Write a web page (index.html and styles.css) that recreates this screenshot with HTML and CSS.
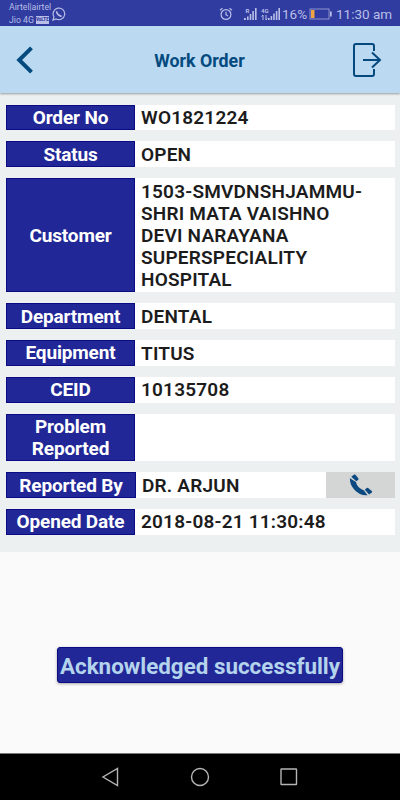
FILE: index.html
```html
<!DOCTYPE html>
<html lang="en">
<head>
    <meta charset="utf-8">
    <meta name="viewport" content="width=device-width, initial-scale=1.0">
    <title>Work Order</title>
    <link rel="stylesheet" href="styles.css">
</head>
<body>
<div class="statusbar">
    <div class="carrier">
        <div>Airtel|airtel</div>
        <div class="jio">Jio 4G <span class="volte">VoLTE</span></div>
    </div>
    <svg class="whatsapp" width="14" height="14" viewBox="0 0 14 14" fill="none" stroke="#b9bfe8" stroke-width="1.2">
        <path d="M1 13l.9-3.2A5.8 5.8 0 1 1 4.2 12z"/>
        <path d="M4.7 4.2c-.5 2.3 2.8 5.5 5 4.8" stroke-width="1.7"/>
    </svg>
    <svg class="alarm" width="14" height="14" viewBox="0 0 14 14" fill="none" stroke="#b9bfe8" stroke-width="1.2">
        <circle cx="7" cy="7.5" r="4.9"/>
        <path d="M7 4.7v3l2 1.2M1 3.3l2.5-2M13 3.3l-2.5-2"/>
    </svg>
    <svg class="signal" width="38" height="14" viewBox="0 0 38 14" fill="#b9bfe8">
        <path d="M1 11h1.8v2H1zM4 9.5h1.6V13H4zM6.7 7h1.6v6H6.7zM9.3 4h1.6v9H9.3zM12 1h1.6v12H12z"/>
        <path d="M25 11h1.6v2H25zM27.6 9h1.6v4h-1.6zM30.2 6.5h1.6V13h-1.6zM32.8 4h1.6v9h-1.6zM35.4 1H37v12h-1.6z"/>
        <path d="M20 8v5M18.5 9.5L20 8M23 8v5M24.3 11.5L23 13" fill="none" stroke="#b9bfe8"/>
        <text x="2.5" y="5.5" font-size="6" font-weight="700">R</text>
        <text x="18" y="5.8" font-size="6" font-weight="700">4G</text>
    </svg>
    <span class="percent">16%</span>
    <svg class="battery" width="24" height="12" viewBox="0 0 24 12">
        <rect x="1" y="1" width="19" height="10" fill="none" stroke="#8e94ce"/>
        <rect x="2" y="2" width="3.5" height="8" fill="#f0a343"/>
        <rect x="21" y="3.5" width="1.7" height="5" fill="#b9bfe8"/>
    </svg>
    <span class="clock">11:30 am</span>
</div>

<div class="header">
    <svg class="back" width="18" height="28" viewBox="0 0 18 28" fill="none" stroke="#044a7f" stroke-width="4">
        <path d="M15.5 1.9L3.2 14l12.3 12.1"/>
    </svg>
    <h1>Work Order</h1>
    <svg class="logout" width="30" height="34" viewBox="0 0 30 34" fill="none" stroke="#044a7f" stroke-width="2">
        <path d="M22 8V3a2 2 0 0 0-2-2H4a2 2 0 0 0-2 2v28a2 2 0 0 0 2 2h16a2 2 0 0 0 2-2v-5"/>
        <path d="M11 17h17M20 9.5l8 7.5-8 7.5"/>
    </svg>
</div>

<div class="order">
    <div class="row">
        <div class="label">Order No</div>
        <div class="value">WO1821224</div>
    </div>
    <div class="row">
        <div class="label">Status</div>
        <div class="value">OPEN</div>
    </div>
    <div class="row">
        <div class="label">Customer</div>
        <div class="value">1503-SMVDNSHJAMMU-<br>SHRI MATA VAISHNO<br>DEVI NARAYANA<br>SUPERSPECIALITY<br>HOSPITAL</div>
    </div>
    <div class="row">
        <div class="label">Department</div>
        <div class="value">DENTAL</div>
    </div>
    <div class="row">
        <div class="label">Equipment</div>
        <div class="value">TITUS</div>
    </div>
    <div class="row">
        <div class="label">CEID</div>
        <div class="value">10135708</div>
    </div>
    <div class="row">
        <div class="label">Problem<br>Reported</div>
        <div class="value"></div>
    </div>
    <div class="row row-call">
        <div class="label">Reported By</div>
        <div class="value">DR. ARJUN</div>
        <div class="call">
            <svg width="24" height="22" viewBox="0 0 24 22" fill="#0b4a80">
                <path d="M1 4.2C0 12.5 9.5 22.5 18.5 21.2L14.8 16.2C11.5 15.5 7.5 11.5 7 8z"/>
                <path d="M2.3 2.8L5.2.6q.8-.5 1.5.3L9.4 4.4q.5.7-.2 1.3L7.3 7.2z"/>
                <path d="M15.8 15.7l1.9-1.7q.7-.5 1.4 0l3.7 3q.7.7 0 1.4l-2.7 2.2z"/>
            </svg>
        </div>
    </div>
    <div class="row">
        <div class="label">Opened Date</div>
        <div class="value">2018-08-21 11:30:48</div>
    </div>
</div>

<div class="message">
    <button class="button">Acknowledged successfully</button>
</div>

<div class="navbar">
    <svg width="20" height="20" viewBox="0 0 20 20"><path d="M16.5 1.5v17L2 10z"/></svg>
    <svg width="20" height="20" viewBox="0 0 20 20"><circle cx="10" cy="10" r="8.5"/></svg>
    <svg width="20" height="20" viewBox="0 0 20 20"><rect x="2" y="2" width="15.5" height="15.5" rx=".5"/></svg>
</div>
</body>
</html>
```

FILE: styles.css
```css
        body {
            font-family: Roboto, sans-serif;
            margin: 0;
            height: 800px;
            display: flex;
            flex-direction: column;
            background-color: #fafafa;
            overflow: hidden;
        }

        svg {
            flex: none;
            display: block;
        }

        .statusbar {
            height: 26px;
            box-sizing: border-box;
            padding: 1px 9px 0;
            display: flex;
            align-items: center;
            background-color: #303c9f;
            color: #b9bfe8;
            white-space: nowrap;
        }

        .carrier {
            width: 42px;
            font-size: 8.7px;
            line-height: 13px;
        }

        .jio {
            display: flex;
            align-items: center;
        }

        .volte {
            margin-left: 2px;
            width: 13px;
            height: 8px;
            line-height: 8px;
            font-size: 4.5px;
            font-weight: 900;
            text-align: center;
            background-color: #b9bfe8;
            color: #303c9f;
        }

        .whatsapp {
            margin-left: 1px;
        }

        .alarm {
            margin-left: auto;
            margin-right: 10px;
        }

        .percent {
            width: 27px;
            margin-left: 1px;
            font-size: 13.5px;
        }

        .battery {
            width: 24px;
        }

        .clock {
            width: 55px;
            margin-left: 3px;
            font-size: 13.5px;
        }

        .header {
            height: 67px;
            box-sizing: border-box;
            padding: 0 18px 0 16px;
            display: flex;
            align-items: center;
            justify-content: space-between;
            background-color: #bbdaf1;
            box-shadow: 0 1px 2px rgba(0, 0, 0, 0.35);
            z-index: 1;
        }

        h1 {
            margin: 1px 0 0 13px;
            font-size: 17.8px;
            font-weight: 700;
            color: #044a7f;
        }

        .order {
            padding: 11.6px 5px 17px 6px;
            display: flex;
            flex-direction: column;
            gap: 11.1px;
            background-color: #ecf0f1;
        }

        .row {
            display: flex;
            min-height: 25.6px;
            font-size: 19px;
            font-weight: 700;
            line-height: 22.1px;
        }

        .label {
            width: 129px;
            box-sizing: border-box;
            border: 1px solid #0b0c84;
            padding-top: 1.2px;
            display: flex;
            align-items: center;
            justify-content: center;
            text-align: center;
            background-color: #212796;
            color: #fff;
            letter-spacing: -0.15px;
        }

        .value {
            flex: 1;
            padding: 2.5px 0 1.1px 6px;
            background-color: #fff;
            color: #1c1c1c;
            font-weight: 600;
            letter-spacing: 0.2px;
        }

        .row-call .label {
            width: 130px;
        }

        .call {
            width: 69px;
            display: flex;
            align-items: center;
            justify-content: center;
            background-color: #d4d5d5;
        }

        .message {
            flex: 1;
            padding-top: 95px;
            text-align: center;
        }

        .button {
            width: 286px;
            height: 36px;
            padding: 2px 0 0;
            border: 1px solid #0b0c84;
            border-radius: 3px;
            background-color: #212796;
            color: #b4d3ec;
            font-family: Roboto, sans-serif;
            font-size: 22.4px;
            font-weight: 700;
            white-space: nowrap;
            box-shadow: 0 1px 3px rgba(0, 0, 0, 0.35);
        }

        .navbar {
            height: 47px;
            box-sizing: border-box;
            border-top: 1px solid #777;
            display: flex;
            align-items: center;
            justify-content: center;
            gap: 69px;
            background-color: #000;
        }

        .navbar svg {
            fill: none;
            stroke: #b5b5b5;
            stroke-width: 1.4;
        }
```
